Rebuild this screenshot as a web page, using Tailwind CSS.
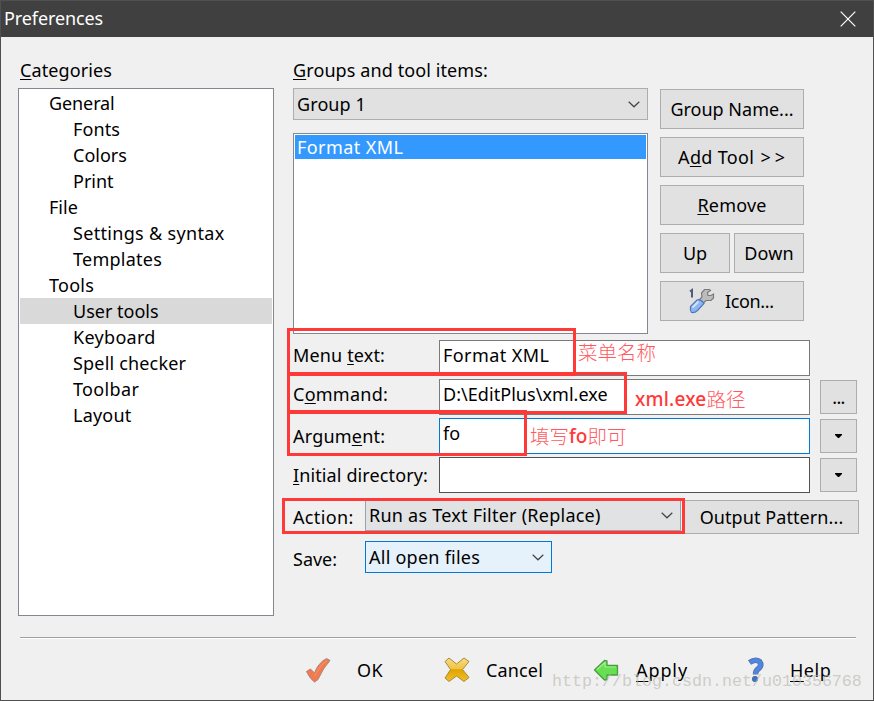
<!DOCTYPE html>
<html lang="en">
<head>
<meta charset="utf-8">
<title>Preferences</title>
<script src="https://cdn.jsdelivr.net/npm/@tailwindcss/browser@4"></script>
</head>
<body class="bg-[#f0f0f0]">
<div class="relative flex h-[701px] w-[874px] flex-col overflow-hidden border border-[#505050] bg-[#f0f0f0] font-['Noto_Sans','Noto_Sans_CJK_SC',sans-serif] text-[18px] leading-[26px] whitespace-nowrap text-black">
  <!-- Title bar -->
  <header class="flex h-[36px] shrink-0 items-start justify-between bg-[#404040] pl-[3px] pr-[17px] text-white">
    <span class="mt-1 tracking-[-0.1px]">Preferences</span>
    <svg class="mt-[10px] h-[16px] w-[16px]" viewBox="0 0 16 16" fill="none" stroke="#fff" stroke-width="1.2"><path d="M.7 .7L15.300 15.300M15.300 .7L.7 15.300"/></svg>
  </header>

  <!-- Body -->
  <main class="flex h-[579px] shrink-0 pl-[17px] pt-[20px]">
    <section class="w-[256px]">
      <h2 class="pl-[2px] tracking-[0.1px]"><u class="underline-offset-2">C</u>ategories</h2>
      <ul class="mt-[5px] h-[528px] border border-[#828790] bg-white p-px">
        <li class="pl-[29px] tracking-[-0.1px]">General</li>
        <li class="pl-[53px] tracking-[0.1px]">Fonts</li>
        <li class="pl-[53px]">Colors</li>
        <li class="pl-[53px]">Print</li>
        <li class="pl-[29px]">File</li>
        <li class="pl-[53px] tracking-[0.32px]">Settings &amp; syntax</li>
        <li class="pl-[53px] tracking-[0.25px]">Templates</li>
        <li class="pl-[29px] tracking-[0.25px]">Tools</li>
        <li class="bg-[#d9d9d9] pl-[53px]">User tools</li>
        <li class="pl-[53px] tracking-[0.3px]">Keyboard</li>
        <li class="pl-[53px] tracking-[0.18px]">Spell checker</li>
        <li class="pl-[53px] tracking-[0.35px]">Toolbar</li>
        <li class="pl-[53px] tracking-[0.2px]">Layout</li>
      </ul>
    </section>

    <section class="ml-[19px] w-[566px]">
      <h2 class="tracking-[0.1px]"><u class="underline-offset-2">G</u>roups and tool items:</h2>
      <div class="mt-[5px] flex">
        <div class="w-[355px]">
          <div class="flex h-[32px] items-center justify-between border border-[#adadad] bg-[#e1e1e1] pl-[3px] pr-[7px]">
            <span class="tracking-[0.1px]">Group 1</span>
            <svg class="h-[7px] w-[12px]" viewBox="0 0 12 7" fill="none" stroke="#444" stroke-width="1.2"><path d="M.7 .7L6 5.8L11.3 .7"/></svg>
          </div>
          <div class="mt-[13px] h-[201px] border border-[#828790] bg-white p-px">
            <div class="h-[24px] bg-[#3399ff] pl-[2px] leading-[24px] tracking-[0.42px] text-white">Format XML</div>
          </div>
        </div>
        <div class="ml-[12px] mt-px grid w-[144px] grid-cols-2 content-start gap-x-1 gap-y-2 text-center leading-[38px]">
          <div class="col-span-2 h-[40px] border border-[#adadad] bg-[#e1e1e1]">Group Name...</div>
          <div class="col-span-2 h-[40px] border border-[#adadad] bg-[#e1e1e1] tracking-[0.35px]">A<u class="underline-offset-2">d</u>d Tool <span class="ml-px -mr-[3px] tracking-[4px]">&gt;&gt;</span></div>
          <div class="col-span-2 h-[40px] border border-[#adadad] bg-[#e1e1e1] tracking-[0.2px]"><u class="underline-offset-2">R</u>emove</div>
          <div class="h-[40px] border border-[#adadad] bg-[#e1e1e1]">Up</div>
          <div class="h-[40px] border border-[#adadad] bg-[#e1e1e1] tracking-[0.2px]">Down</div>
          <div class="col-span-2 flex h-[40px] border border-[#adadad] bg-[#e1e1e1] pl-[28px]">
            <svg class="mt-[6px] h-[26px] w-[26px]" viewBox="0 0 26 26">
              <path d="M1 3.500L3 2V9.500" fill="none" stroke="#4e5d7c" stroke-width="2"/>
              <path d="M12.500 5L15.500 1.500H20.500L21.500 2.500L18.500 4.500L19 7.500H22L24.500 6V10L22 12.500H17L14 15.500L10 12L13 9Z" fill="#bcbcbc" stroke="#7b7b7b" stroke-width="1.200"/>
              <path d="M1.500 18.500L8 12Q11.500 10.500 15 15.500L8.500 22.500Q6 25 2.500 24.500Q.8 22 1.500 18.500Z" fill="#8fb5f0" stroke="#5278ba" stroke-width="1.200"/>
              <path d="M3.500 19.500L9.500 13.500" stroke="#d0e2ff" stroke-width="2"/>
            </svg>
            <span class="ml-[10px] tracking-[-0.35px]">Icon...</span>
          </div>
        </div>
      </div>

      <!-- Tool properties -->
      <div class="mt-[6px] flex flex-col gap-[3px]">
        <div class="flex h-[36px]">
          <label class="w-[146px] leading-[30px] tracking-[0.15px]">Menu <u class="underline-offset-2">t</u>ext:</label>
          <div class="w-[371px] border border-[#7a7a7a] bg-white pl-[3px] leading-[28px] tracking-[0.42px]">Format XML</div>
        </div>
        <div class="flex h-[36px]">
          <label class="w-[146px] leading-[30px] tracking-[0.25px]">C<u class="underline-offset-2">o</u>mmand:</label>
          <div class="w-[371px] border border-[#7a7a7a] bg-white pl-[3px] leading-[28px] tracking-[0.05px]">D:\EditPlus\xml.exe</div>
          <div class="ml-[10px] mt-px h-[34px] w-[37px] border border-[#adadad] bg-[#e1e1e1] text-center leading-[32px] tracking-[-0.7px]">...</div>
        </div>
        <div class="flex h-[36px]">
          <label class="w-[146px] leading-[36px] tracking-[0.2px]">Argum<u class="underline-offset-2">e</u>nt:</label>
          <div class="w-[371px] border border-[#0078d7] bg-white pl-[3px] leading-[28px]">fo</div>
          <div class="ml-[10px] mt-px flex h-[34px] w-[37px] items-center justify-center border border-[#adadad] bg-[#e1e1e1]"><svg class="h-[4px] w-[7px]" viewBox="0 0 7 4"><path d="M0 0H7V1L4 4H3L0 1Z"/></svg></div>
        </div>
        <div class="flex h-[36px]">
          <label class="w-[146px] leading-[36px] tracking-[0.12px]"><u class="underline-offset-2">I</u>nitial directory:</label>
          <div class="w-[371px] border border-[#525252] bg-white"></div>
          <div class="ml-[10px] mt-px flex h-[34px] w-[37px] items-center justify-center border border-[#adadad] bg-[#e1e1e1]"><svg class="h-[4px] w-[7px]" viewBox="0 0 7 4"><path d="M0 0H7V1L4 4H3L0 1Z"/></svg></div>
        </div>
      </div>
      <div class="mt-[6px] flex h-[36px]">
        <label class="w-[72px] leading-[36px] tracking-[0.35px]">Action:</label>
        <div class="flex h-[32px] w-[316px] items-center justify-between border border-[#9aa3ad] bg-[#e1e2e4] pl-[3px] pr-[7px]">
          <span class="tracking-[0.24px]">Run as Text Filter (Replace)</span>
          <svg class="h-[7px] w-[12px]" viewBox="0 0 12 7" fill="none" stroke="#444" stroke-width="1.2"><path d="M.7 .7L6 5.8L11.3 .7"/></svg>
        </div>
        <div class="ml-[3px] mt-px h-[34px] w-[175px] border border-[#adadad] bg-[#e1e1e1] text-center leading-[32px] tracking-[0.08px]">Output Pattern...</div>
      </div>
      <div class="mt-[6px] flex h-[36px]">
        <label class="w-[72px] leading-[36px]">Save:</label>
        <div class="flex h-[32px] w-[187px] items-center justify-between border border-[#0078d7] bg-[#e5f1fb] pl-[3px] pr-[7px]">
          <span class="tracking-[0.25px]">All open files</span>
          <svg class="h-[7px] w-[12px]" viewBox="0 0 12 7" fill="none" stroke="#444" stroke-width="1.2"><path d="M.7 .7L6 5.8L11.3 .7"/></svg>
        </div>
      </div>
    </section>
  </main>

  <!-- Dialog actions -->
  <div class="ml-[19px] mt-[21px] h-[2px] w-[836px] shrink-0 border-b border-white bg-[#a0a0a0]"></div>
  <footer class="flex h-[62px] shrink-0 items-center pl-[304px]">
    <div class="flex w-[139px] items-center">
      <svg class="h-[26px] w-[26px]" viewBox="0 0 26 26"><path d="M1.500 14.500L5.500 12L9.500 16Q13 6 21.500 1.500L25 3.500Q18 11 13 22.500L9.500 25Q5 22 1.500 14.500Z" fill="#f27a4e" stroke="#a98475" stroke-width="1"/><path d="M10 19Q14 9 22 3.500" fill="none" stroke="#f58d66" stroke-width="1.5"/></svg>
      <span class="ml-[26px] tracking-[0.4px]">OK</span>
    </div>
    <div class="flex w-[149px] items-center">
      <svg class="h-[26px] w-[26px]" viewBox="0 0 26 26"><defs><linearGradient id="gold" x2="0" y2="1"><stop stop-color="#f8dc80"/><stop offset=".45" stop-color="#f0c545"/><stop offset=".5" stop-color="#e0a400"/><stop offset="1" stop-color="#f2c02c"/></linearGradient></defs><path d="M1 4.500L5 1L12.500 7L20 1L25 4.500L18.500 12.500L25 20.500L20 24.500L12.500 19L5 24.500L1 21L6.500 12.500Z" fill="url(#gold)" stroke="#a58a42" stroke-width="1"/></svg>
      <span class="ml-[16px] tracking-[0.15px]">Cancel</span>
    </div>
    <div class="flex w-[151px] items-center">
      <svg class="h-[26px] w-[26px]" viewBox="0 0 26 26"><path d="M1.500 13L11.500 3.500L14 4V8.500H24.500V18H14V22.500L11.500 23Z" fill="#66df50" stroke="#4b9c42" stroke-width="1.3" stroke-linejoin="round"/><path d="M4 12.500L12 5.500V10H23" fill="none" stroke="#a2f092" stroke-width="1.2"/></svg>
      <span class="ml-[17px] tracking-[0.9px]"><u class="underline-offset-4">A</u>pply</span>
    </div>
    <div class="flex items-center">
      <svg class="h-[26px] w-[26px]" viewBox="0 0 26 26"><path d="M5.500 5.500Q11.500 1.500 15.500 4.500Q18.500 8.500 14 12Q11.500 14 11.500 17.500" fill="none" stroke="#5d6f96" stroke-width="5.500"/><path d="M6 5.500Q11.500 1.500 15.500 4.500Q18.500 8.500 14 12Q11.500 14 11.500 17" fill="none" stroke="#4d86e6" stroke-width="4"/><circle cx="11" cy="22" r="2.700" fill="#386fd2" stroke="#5d6f96"/></svg>
      <span class="ml-[20px] tracking-[0.5px]"><u class="underline-offset-4">H</u>elp</span>
    </div>
  </footer>

  <!-- Annotations and watermark over the dialog -->
  <div class="absolute left-[286px] top-[327px] h-[48px] w-[289px] border-3 border-[#ff3838]"></div>
  <div class="absolute left-[286px] top-[371px] h-[42px] w-[340px] border-3 border-[#ff3838]"></div>
  <div class="absolute left-[286px] top-[409px] h-[46px] w-[240px] border-3 border-[#ff3838]"></div>
  <div class="absolute left-[281px] top-[497px] h-[36px] w-[403px] border-3 border-[#ff3838]"></div>
  <div class="absolute left-[577px] top-[338px] font-['Noto_Sans_CJK_SC',sans-serif] text-[19.5px] font-light text-[#ff5a60]">菜单名称</div>
  <div class="absolute left-[634px] top-[385px] flex font-['Noto_Sans_CJK_SC',sans-serif] text-[19.5px] font-light text-[#ff5a60]"><span class="font-['Noto_Sans',sans-serif] text-[19px] font-medium tracking-[0.2px] text-[#ff3838]">xml.exe</span><span>路径</span></div>
  <div class="absolute left-[529px] top-[422px] flex font-['Noto_Sans_CJK_SC',sans-serif] text-[19.5px] font-light text-[#ff5a60]"><span>填写</span><span class="font-['Noto_Sans',sans-serif] text-[19px] font-medium text-[#ff3838]">fo</span><span>即可</span></div>
  <div class="absolute left-[551px] top-[668px] font-['Liberation_Mono',monospace] text-[16.67px] text-[#b8b8b0]/65">http://blog.csdn.net/u010356768</div>
</div>
</body>
</html>
